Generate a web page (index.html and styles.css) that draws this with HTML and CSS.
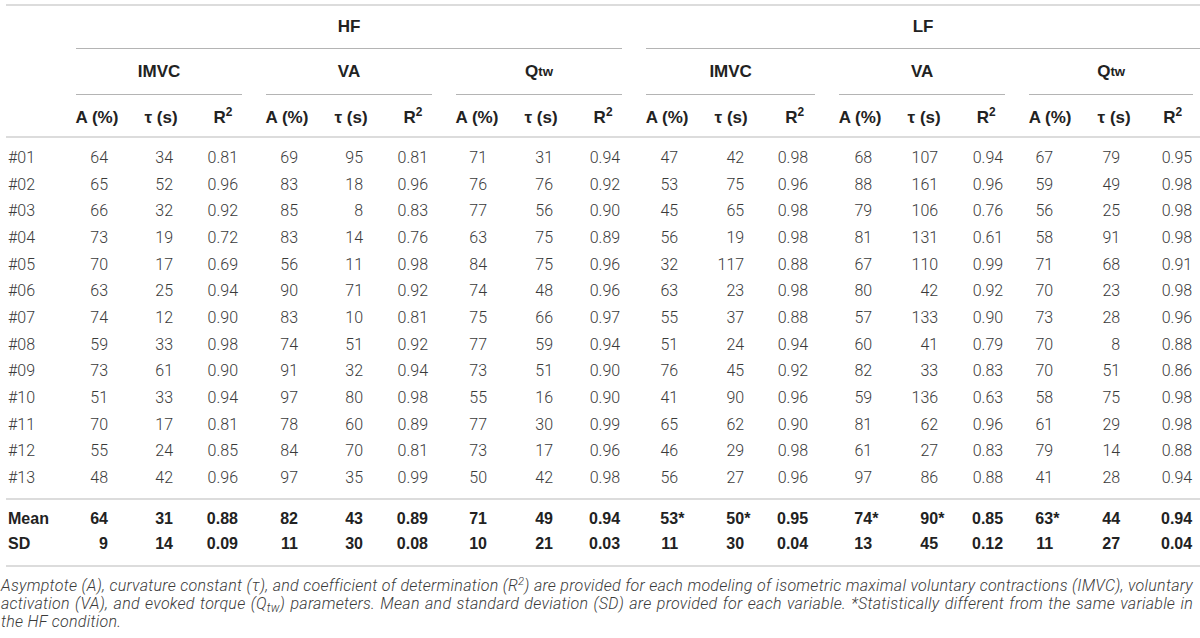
FILE: index.html
```html
<!DOCTYPE html>
<html lang="en">
<head>
<meta charset="utf-8">
<title>Table</title>
<link rel="stylesheet" href="styles.css">
</head>
<body>
<div class="page">
<table class="results">
  <colgroup>
    <col class="w-label">
    <col class="w-a"><col class="w-t"><col class="w-r">
    <col class="w-a"><col class="w-t"><col class="w-r">
    <col class="w-a"><col class="w-t"><col class="w-r">
    <col class="w-a"><col class="w-t"><col class="w-r2">
    <col class="w-a"><col class="w-t"><col class="w-r">
    <col class="w-a"><col class="w-t"><col class="w-r3">
  </colgroup>
  <thead>
    <tr class="h1">
      <th></th>
      <th colspan="9"><div class="gl">HF</div></th>
      <th colspan="9"><div class="gl last">LF</div></th>
    </tr>
    <tr class="h2">
      <th></th>
      <th colspan="3"><div class="gl">IMVC</div></th>
      <th colspan="3"><div class="gl">VA</div></th>
      <th colspan="3"><div class="gl">Q<sub>tw</sub></div></th>
      <th colspan="3"><div class="gl">IMVC</div></th>
      <th colspan="3"><div class="gl">VA</div></th>
      <th colspan="3"><div class="gl last2">Q<sub>tw</sub></div></th>
    </tr>
    <tr class="h3">
      <th></th>
      <th>A (%)</th><th>τ (s)</th><th>R<sup>2</sup></th>
      <th>A (%)</th><th>τ (s)</th><th>R<sup>2</sup></th>
      <th>A (%)</th><th>τ (s)</th><th>R<sup>2</sup></th>
      <th>A (%)</th><th>τ (s)</th><th>R<sup>2</sup></th>
      <th>A (%)</th><th>τ (s)</th><th>R<sup>2</sup></th>
      <th>A (%)</th><th>τ (s)</th><th>R<sup>2</sup></th>
    </tr>
  </thead>
  <tbody class="subjects">
    <tr class="first"><td>#01</td><td>64</td><td>34</td><td>0.81</td><td>69</td><td>95</td><td>0.81</td><td>71</td><td>31</td><td>0.94</td><td>47</td><td>42</td><td>0.98</td><td>68</td><td>107</td><td>0.94</td><td>67</td><td>79</td><td>0.95</td></tr>
    <tr><td>#02</td><td>65</td><td>52</td><td>0.96</td><td>83</td><td>18</td><td>0.96</td><td>76</td><td>76</td><td>0.92</td><td>53</td><td>75</td><td>0.96</td><td>88</td><td>161</td><td>0.96</td><td>59</td><td>49</td><td>0.98</td></tr>
    <tr><td>#03</td><td>66</td><td>32</td><td>0.92</td><td>85</td><td>8</td><td>0.83</td><td>77</td><td>56</td><td>0.90</td><td>45</td><td>65</td><td>0.98</td><td>79</td><td>106</td><td>0.76</td><td>56</td><td>25</td><td>0.98</td></tr>
    <tr><td>#04</td><td>73</td><td>19</td><td>0.72</td><td>83</td><td>14</td><td>0.76</td><td>63</td><td>75</td><td>0.89</td><td>56</td><td>19</td><td>0.98</td><td>81</td><td>131</td><td>0.61</td><td>58</td><td>91</td><td>0.98</td></tr>
    <tr><td>#05</td><td>70</td><td>17</td><td>0.69</td><td>56</td><td>11</td><td>0.98</td><td>84</td><td>75</td><td>0.96</td><td>32</td><td>117</td><td>0.88</td><td>67</td><td>110</td><td>0.99</td><td>71</td><td>68</td><td>0.91</td></tr>
    <tr><td>#06</td><td>63</td><td>25</td><td>0.94</td><td>90</td><td>71</td><td>0.92</td><td>74</td><td>48</td><td>0.96</td><td>63</td><td>23</td><td>0.98</td><td>80</td><td>42</td><td>0.92</td><td>70</td><td>23</td><td>0.98</td></tr>
    <tr><td>#07</td><td>74</td><td>12</td><td>0.90</td><td>83</td><td>10</td><td>0.81</td><td>75</td><td>66</td><td>0.97</td><td>55</td><td>37</td><td>0.88</td><td>57</td><td>133</td><td>0.90</td><td>73</td><td>28</td><td>0.96</td></tr>
    <tr><td>#08</td><td>59</td><td>33</td><td>0.98</td><td>74</td><td>51</td><td>0.92</td><td>77</td><td>59</td><td>0.94</td><td>51</td><td>24</td><td>0.94</td><td>60</td><td>41</td><td>0.79</td><td>70</td><td>8</td><td>0.88</td></tr>
    <tr><td>#09</td><td>73</td><td>61</td><td>0.90</td><td>91</td><td>32</td><td>0.94</td><td>73</td><td>51</td><td>0.90</td><td>76</td><td>45</td><td>0.92</td><td>82</td><td>33</td><td>0.83</td><td>70</td><td>51</td><td>0.86</td></tr>
    <tr><td>#10</td><td>51</td><td>33</td><td>0.94</td><td>97</td><td>80</td><td>0.98</td><td>55</td><td>16</td><td>0.90</td><td>41</td><td>90</td><td>0.96</td><td>59</td><td>136</td><td>0.63</td><td>58</td><td>75</td><td>0.98</td></tr>
    <tr><td>#11</td><td>70</td><td>17</td><td>0.81</td><td>78</td><td>60</td><td>0.89</td><td>77</td><td>30</td><td>0.99</td><td>65</td><td>62</td><td>0.90</td><td>81</td><td>62</td><td>0.96</td><td>61</td><td>29</td><td>0.98</td></tr>
    <tr><td>#12</td><td>55</td><td>24</td><td>0.85</td><td>84</td><td>70</td><td>0.81</td><td>73</td><td>17</td><td>0.96</td><td>46</td><td>29</td><td>0.98</td><td>61</td><td>27</td><td>0.83</td><td>79</td><td>14</td><td>0.88</td></tr>
    <tr class="last"><td>#13</td><td>48</td><td>42</td><td>0.96</td><td>97</td><td>35</td><td>0.99</td><td>50</td><td>42</td><td>0.98</td><td>56</td><td>27</td><td>0.96</td><td>97</td><td>86</td><td>0.88</td><td>41</td><td>28</td><td>0.94</td></tr>
  </tbody>
  <tbody class="summary">
    <tr class="first"><td>Mean</td><td>64</td><td>31</td><td>0.88</td><td>82</td><td>43</td><td>0.89</td><td>71</td><td>49</td><td>0.94</td><td>53<span class="ast">*</span></td><td>50<span class="ast">*</span></td><td>0.95</td><td>74<span class="ast">*</span></td><td>90<span class="ast">*</span></td><td>0.85</td><td>63<span class="ast">*</span></td><td>44</td><td>0.94</td></tr>
    <tr class="last"><td>SD</td><td>9</td><td>14</td><td>0.09</td><td>11</td><td>30</td><td>0.08</td><td>10</td><td>21</td><td>0.03</td><td>11</td><td>30</td><td>0.04</td><td>13</td><td>45</td><td>0.12</td><td>11</td><td>27</td><td>0.04</td></tr>
  </tbody>
</table>
<p class="caption"><span class="cl just">Asymptote (A), curvature constant (τ), and coefficient of determination (R<sup>2</sup>) are provided for each modeling of isometric maximal voluntary contractions (IMVC), voluntary</span> <span class="cl just">activation (VA), and evoked torque (Q<sub>tw</sub>) parameters. Mean and standard deviation (SD) are provided for each variable. *Statistically different from the same variable in</span> <span class="cl">the HF condition.</span></p>
</div>
</body>
</html>
```

FILE: styles.css
```css
html, body {
  margin: 0;
  padding: 0;
  background: #ffffff;
}

.page {
  width: 1200px;
  overflow: hidden;
}

.results {
  margin: 4px 0 0 6px;
  width: 1194px;
  table-layout: fixed;
  border-collapse: collapse;
  border-top: 2px solid #dcdcdc;
  font-family: Roboto, "Liberation Sans", sans-serif;
  font-size: 16px;
  color: #3a3a3a;
}

.w-label { width: 58px; }
.w-a { width: 66px; }
.w-t { width: 62px; }
.w-r { width: 62px; }
.w-r2 { width: 65px; }
.w-r3 { width: 55px; }

.results th {
  padding: 0;
  font-family: "Liberation Sans", Arial, sans-serif;
  font-weight: 700;
  font-size: 17px;
  color: #222222;
  text-align: center;
  white-space: nowrap;
}

.gl {
  margin: 0 12px;
  border-bottom: 1px solid #b4b4b4;
  display: flex;
  align-items: center;
  justify-content: center;
}

.gl.last { margin-right: 0; }
.gl.last2 { margin-right: 7px; }

.h1 .gl { height: 42px; }
.h2 .gl { height: 45px; }

.h3 th {
  height: 36px;
  padding-top: 5px;
  border-bottom: 2px solid #dcdcdc;
}

.results sup {
  font-size: 0.7em;
  line-height: 0;
  vertical-align: 0.55em;
}

.results sub {
  font-size: 0.78em;
  line-height: 0;
  vertical-align: -0.3em;
}

.results td {
  padding: 0;
  height: 26.67px;
  line-height: 26.67px;
  text-align: right;
  font-weight: 300;
  white-space: nowrap;
}

.results td:first-child {
  text-align: left;
  padding-left: 2px;
}

.results tr.first td { padding-top: 7px; }
.subjects tr.last td { padding-bottom: 6px; }

.summary {
  border-top: 2px solid #dcdcdc;
  border-bottom: 2px solid #dcdcdc;
}

.summary td {
  height: 25px;
  line-height: 25px;
  font-family: "Liberation Sans", Arial, sans-serif;
  font-weight: 700;
  color: #222222;
}

.summary tr.first td { padding-top: 6px; }
.summary tr.last td { padding-bottom: 9px; }

.ast {
  margin-right: -0.39em;
}

.results td:nth-child(2) { padding-right: 22px; }
.results td:nth-child(3) { padding-right: 19px; }
.results td:nth-child(4) { padding-right: 16px; }
.results td:nth-child(5) { padding-right: 22px; }
.results td:nth-child(6) { padding-right: 19px; }
.results td:nth-child(7) { padding-right: 16px; }
.results td:nth-child(8) { padding-right: 23px; }
.results td:nth-child(9) { padding-right: 19px; }
.results td:nth-child(10) { padding-right: 14px; }
.results td:nth-child(11) { padding-right: 22px; }
.results td:nth-child(12) { padding-right: 18px; }
.results td:nth-child(13) { padding-right: 19px; }
.results td:nth-child(14) { padding-right: 21px; }
.results td:nth-child(15) { padding-right: 17px; }
.results td:nth-child(16) { padding-right: 14px; }
.results td:nth-child(17) { padding-right: 30px; }
.results td:nth-child(18) { padding-right: 25px; }
.results td:nth-child(19) { padding-right: 8px; }

.caption {
  width: 1192px;
  margin: 10px 0 0 0;
  padding-left: 1px;
  font-family: Roboto, "Liberation Sans", sans-serif;
  font-weight: 300;
  font-style: italic;
  font-size: 16px;
  line-height: 18px;
  letter-spacing: 0.26px;
  color: #3a3a3a;
}

.cl {
  display: block;
  white-space: nowrap;
}

.cl.just {
  white-space: normal;
  text-align: justify;
  text-align-last: justify;
}

.caption sup {
  font-size: 0.7em;
  line-height: 0;
  vertical-align: 0.55em;
}

.caption sub {
  font-size: 0.75em;
  line-height: 0;
  vertical-align: -0.25em;
}
```
